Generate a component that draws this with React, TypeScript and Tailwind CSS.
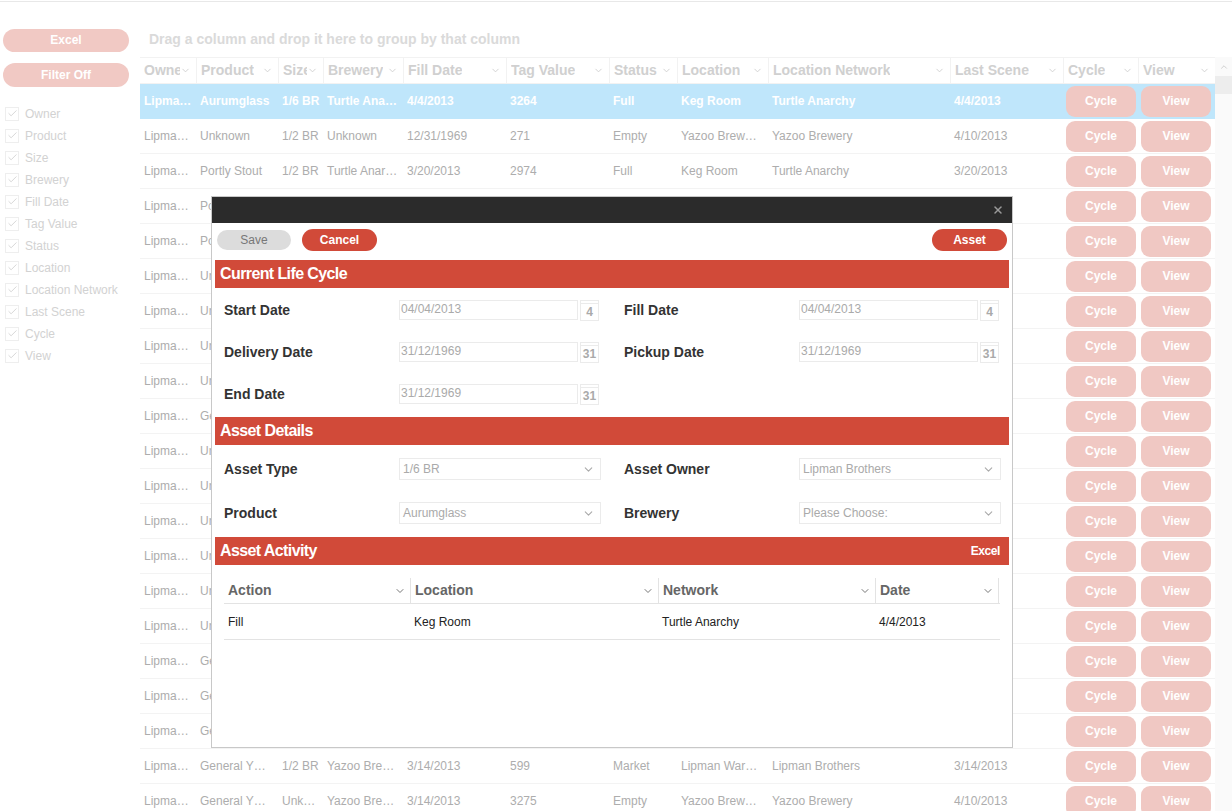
import { Check, ChevronDown, ChevronUp, X } from "lucide-react";

type Row = {
  owner: string;
  product: string;
  size: string;
  brewery: string;
  fill: string;
  tag: string;
  status: string;
  location: string;
  network: string;
  last: string;
};

const columns = [
  { name: "Owner", w: "w-[56px]" },
  { name: "Product", w: "w-[82px]" },
  { name: "Size", w: "w-[45px]" },
  { name: "Brewery", w: "w-[80px]" },
  { name: "Fill Date", w: "w-[103px]" },
  { name: "Tag Value", w: "w-[103px]" },
  { name: "Status", w: "w-[68px]" },
  { name: "Location", w: "w-[91px]" },
  { name: "Location Network", w: "w-[182px]" },
  { name: "Last Scene", w: "w-[113px]" },
  { name: "Cycle", w: "w-[75px]" },
  { name: "View", w: "w-[77px]" },
];

const filler = (product: string): Row => ({
  owner: "Lipma…",
  product,
  size: "1/2 BR",
  brewery: "Yazoo Bre…",
  fill: "3/14/2013",
  tag: "1120",
  status: "Market",
  location: "Lipman War…",
  network: "Lipman Brothers",
  last: "3/14/2013",
});

const rows: Row[] = [
  { owner: "Lipma…", product: "Aurumglass", size: "1/6 BR", brewery: "Turtle Ana…", fill: "4/4/2013", tag: "3264", status: "Full", location: "Keg Room", network: "Turtle Anarchy", last: "4/4/2013" },
  { owner: "Lipma…", product: "Unknown", size: "1/2 BR", brewery: "Unknown", fill: "12/31/1969", tag: "271", status: "Empty", location: "Yazoo Brew…", network: "Yazoo Brewery", last: "4/10/2013" },
  { owner: "Lipma…", product: "Portly Stout", size: "1/2 BR", brewery: "Turtle Anar…", fill: "3/20/2013", tag: "2974", status: "Full", location: "Keg Room", network: "Turtle Anarchy", last: "3/20/2013" },
  filler("Portly Stout"),
  filler("Portly Stout"),
  filler("Unknown"),
  filler("Unknown"),
  filler("Unknown"),
  filler("Unknown"),
  filler("General Y…"),
  filler("Unknown"),
  filler("Unknown"),
  filler("Unknown"),
  filler("Unknown"),
  filler("Unknown"),
  filler("Unknown"),
  filler("General Y…"),
  filler("General Y…"),
  filler("General Y…"),
  { owner: "Lipma…", product: "General Y…", size: "1/2 BR", brewery: "Yazoo Bre…", fill: "3/14/2013", tag: "599", status: "Market", location: "Lipman War…", network: "Lipman Brothers", last: "3/14/2013" },
  { owner: "Lipma…", product: "General Y…", size: "Unk…", brewery: "Yazoo Bre…", fill: "3/14/2013", tag: "3275", status: "Empty", location: "Yazoo Brew…", network: "Yazoo Brewery", last: "4/10/2013" },
];

const sideFields = [
  "Owner",
  "Product",
  "Size",
  "Brewery",
  "Fill Date",
  "Tag Value",
  "Status",
  "Location",
  "Location Network",
  "Last Scene",
  "Cycle",
  "View",
];

function DateField({ label, value, day }: { label: string; value: string; day: string }) {
  return (
    <div className="flex items-center h-[42px]">
      <div className="w-[187px] pl-[12px] text-[14px] font-bold text-[#333]">{label}</div>
      <div className="w-[179px] h-[20px] border border-[#ebebeb] text-[12px] text-[#aaa] leading-[17px] pl-[1px]">
        {value}
      </div>
      <div className="ml-[2px] w-[19px] h-[21px] mt-[1px] border border-[#ebebeb] flex flex-col">
        <div className="h-[3px] border-b border-[#ebebeb]" />
        <div className="flex-1 text-center text-[12px] font-bold text-[#aaa] leading-[16px]">{day}</div>
      </div>
    </div>
  );
}

function SelectField({ label, value }: { label: string; value: string }) {
  return (
    <div className="flex items-center h-[44px]">
      <div className="w-[187px] pl-[12px] text-[14px] font-bold text-[#333]">{label}</div>
      <div className="w-[202px] h-[22px] border border-[#ebebeb] flex items-center justify-between pl-[3px] pr-[5px] text-[12px] text-[#aaa]">
        <span>{value}</span>
        <ChevronDown size={13} strokeWidth={2} className="text-[#aaa]" />
      </div>
    </div>
  );
}

function SectionBar({ title, right }: { title: string; right?: string }) {
  return (
    <div className="mx-[3px] h-[28px] bg-[#d14a39] flex items-center justify-between pl-[5px] pr-[9px]">
      <span className="text-white text-[16px] font-bold tracking-[-0.6px]">{title}</span>
      {right && <span className="text-white text-[12px] font-bold tracking-[-0.4px]">{right}</span>}
    </div>
  );
}

function LifeCycleModal() {
  return (
    <div className="absolute left-[211px] top-[196px] w-[802px] h-[552px] bg-white border border-[#c8c8c8]">
      <div className="h-[26px] bg-[#2b2b2b] flex items-center justify-end pr-[8px]">
        <X size={12} strokeWidth={3} className="text-[#9a9a9a]" />
      </div>
      <div className="flex items-center justify-between px-[5px] pt-[6px] pb-[9px]">
        <div className="flex items-center gap-[11px]">
          <button className="w-[74px] h-[20px] rounded-full bg-[#dcdcdc] text-[12px] text-[#777]">Save</button>
          <button className="w-[75px] h-[22px] rounded-full bg-[#d14a39] text-[12px] font-bold text-white">Cancel</button>
        </div>
        <button className="w-[75px] h-[22px] rounded-full bg-[#d14a39] text-[12px] font-bold text-white">Asset</button>
      </div>
      <SectionBar title="Current Life Cycle" />
      <div className="grid grid-cols-2 pt-[1px] pb-[2px]">
        <div className="flex flex-col">
          <DateField label="Start Date" value="04/04/2013" day="4" />
          <DateField label="Delivery Date" value="31/12/1969" day="31" />
          <DateField label="End Date" value="31/12/1969" day="31" />
        </div>
        <div className="flex flex-col">
          <DateField label="Fill Date" value="04/04/2013" day="4" />
          <DateField label="Pickup Date" value="31/12/1969" day="31" />
        </div>
      </div>
      <SectionBar title="Asset Details" />
      <div className="grid grid-cols-2 pt-[2px] pb-[2px]">
        <div className="flex flex-col">
          <SelectField label="Asset Type" value="1/6 BR" />
          <SelectField label="Product" value="Aurumglass" />
        </div>
        <div className="flex flex-col">
          <SelectField label="Asset Owner" value="Lipman Brothers" />
          <SelectField label="Brewery" value="Please Choose:" />
        </div>
      </div>
      <SectionBar title="Asset Activity" right="Excel" />
      <div className="mx-[12px] mt-[13px]">
        <div className="flex h-[26px] border-b border-[#e3e3e3] text-[14px] font-bold text-[#666]">
          {[
            { n: "Action", w: "w-[186px]" },
            { n: "Location", w: "w-[248px]" },
            { n: "Network", w: "w-[217px]" },
            { n: "Date", w: "w-[124px]" },
          ].map((c, i) => (
            <div
              key={c.n}
              className={`${c.w} flex items-center justify-between pl-[4px] pr-[4px] ${i > 0 ? "border-l border-[#e3e3e3]" : ""} ${i === 3 ? "border-r" : ""}`}
            >
              <span>{c.n}</span>
              <ChevronDown size={12} strokeWidth={2} className="text-[#777]" />
            </div>
          ))}
        </div>
        <div className="flex h-[36px] items-center border-b border-[#e3e3e3] text-[12px] text-[#222]">
          <div className="w-[186px] pl-[4px]">Fill</div>
          <div className="w-[248px] pl-[4px]">Keg Room</div>
          <div className="w-[217px] pl-[4px]">Turtle Anarchy</div>
          <div className="w-[124px] pl-[4px]">4/4/2013</div>
        </div>
      </div>
    </div>
  );
}

export default function App() {
  return (
    <div className="relative w-[1232px] h-[811px] overflow-hidden bg-white font-['Liberation_Sans',Arial,sans-serif]">
      <div className="mt-[1px] h-px bg-[#e8e8e8]" />
      <div className="flex">
        {/* sidebar */}
        <div className="w-[140px] pl-[3px] pt-[25px] shrink-0">
          <button className="w-[126px] h-[23px] rounded-full bg-[#f1c9c4] text-white text-[12px] font-bold">Excel</button>
          <button className="mt-[11px] w-[126px] h-[24px] rounded-full bg-[#f1c9c4] text-white text-[12px] font-bold">Filter Off</button>
          <div className="mt-[16px] flex flex-col">
            {sideFields.map((f) => (
              <div key={f} className="flex items-center h-[22px] pl-[2px]">
                <div className="w-[14px] h-[14px] border border-[#eeeeee] flex items-center justify-center">
                  <Check size={11} strokeWidth={1.6} className="text-[#c8c8c8]" />
                </div>
                <span className="ml-[6px] text-[12px] text-[#d2d2d2]">{f}</span>
              </div>
            ))}
          </div>
        </div>

        {/* grid */}
        <div className="flex-1 pt-[27px]">
          <div className="h-[21px] pl-[9px] text-[14px] font-bold text-[#dadada] leading-[21px]">
            Drag a column and drop it here to group by that column
          </div>
          <div className="flex mt-[7px]">
            <div className="w-[1075px]">
              <div className="flex h-[27px] border-t border-b border-[#f2f2f2]">
                {columns.map((c, i) => (
                  <div
                    key={c.name}
                    className={`${c.w} shrink-0 flex items-center justify-between pl-[4px] pr-[5px] ${i > 0 ? "border-l border-[#f2f2f2]" : ""}`}
                  >
                    <span className="text-[14px] font-bold text-[#d0d0d0] whitespace-nowrap overflow-hidden">{c.name}</span>
                    <ChevronDown size={11} strokeWidth={2} className="text-[#cfcfcf] shrink-0" />
                  </div>
                ))}
              </div>
              {rows.map((r, idx) => {
                const sel = idx === 0;
                const cells = [r.owner, r.product, r.size, r.brewery, r.fill, r.tag, r.status, r.location, r.network, r.last];
                return (
                  <div
                    key={idx}
                    className={`flex h-[35px] items-center border-b ${sel ? "bg-[#bfe6fb] border-[#bfe6fb]" : "border-[#f3f3f3]"}`}
                  >
                    {cells.map((v, i) => (
                      <div
                        key={i}
                        className={`${columns[i].w} shrink-0 pl-[4px] whitespace-nowrap overflow-hidden text-[12px] ${sel ? "text-white font-bold" : "text-[#adadad]"}`}
                      >
                        {v}
                      </div>
                    ))}
                    <div className="w-[75px] shrink-0 pl-[3px]">
                      <button className="w-[70px] h-[31px] rounded-[9px] bg-[#f0c8c3] text-white text-[12px] font-bold">Cycle</button>
                    </div>
                    <div className="w-[77px] shrink-0 pl-[3px]">
                      <button className="w-[70px] h-[31px] rounded-[9px] bg-[#f0c8c3] text-white text-[12px] font-bold">View</button>
                    </div>
                  </div>
                );
              })}
            </div>
            {/* scrollbar */}
            <div className="w-[17px] shrink-0 bg-[#fafafa] flex flex-col">
              <div className="h-[19px] flex items-center justify-center">
                <ChevronUp size={10} strokeWidth={2} className="text-[#c8c8c8]" />
              </div>
              <div className="h-[18px] bg-[#ededed]" />
            </div>
          </div>
        </div>
      </div>

      <LifeCycleModal />
    </div>
  );
}
